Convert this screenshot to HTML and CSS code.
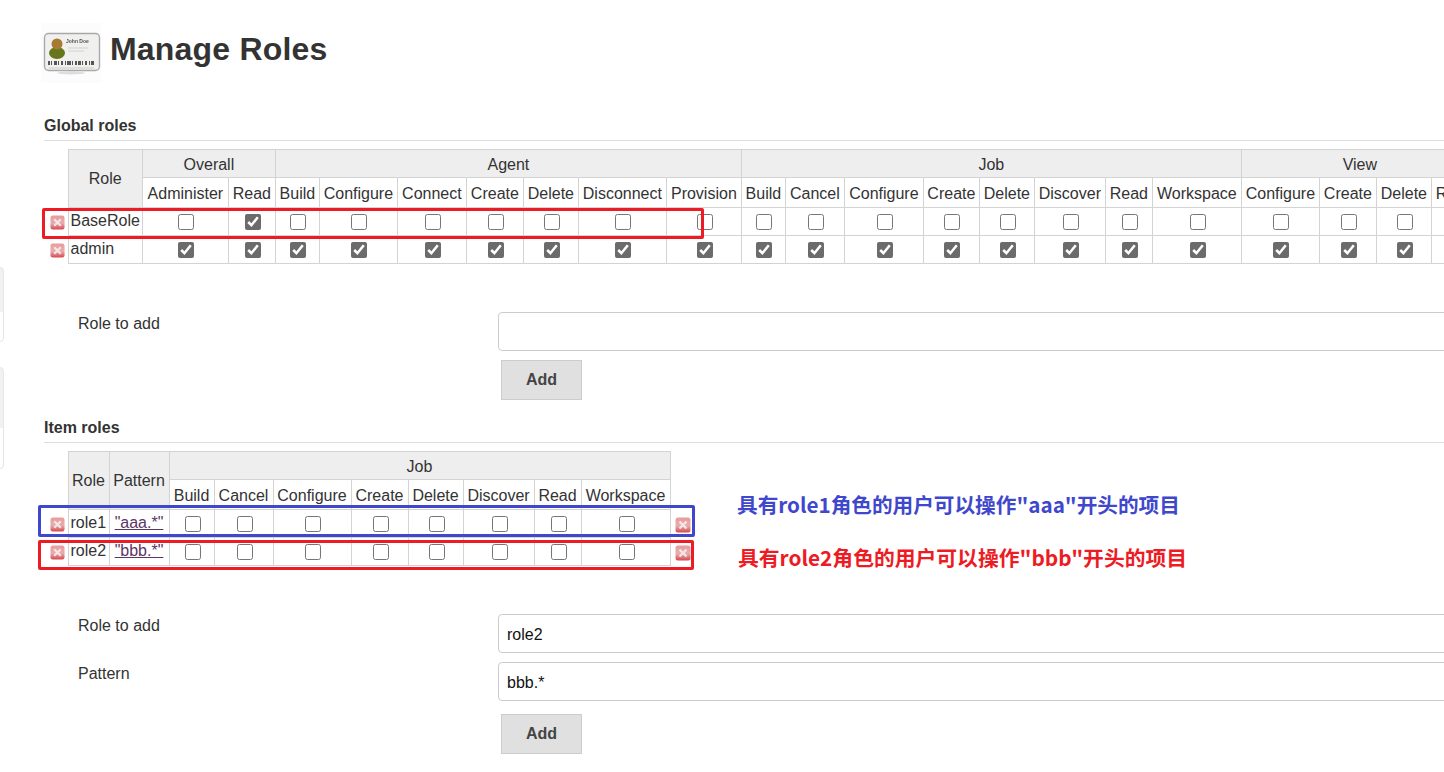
FILE: index.html
```html
<!DOCTYPE html>
<html lang="en">

<head>
    <meta charset="UTF-8">
    <title>Manage Roles</title>
    <link rel="stylesheet" href="styles.css">
</head>

<body>
    <svg class="defs" width="0" height="0">
        <defs>
            <linearGradient id="delFill" x1="0" y1="0" x2="0" y2="1">
                <stop offset="0" stop-color="#eb9a9a" />
                <stop offset="0.55" stop-color="#e6aeae" />
                <stop offset="1" stop-color="#d9474e" />
            </linearGradient>
            <filter id="soft" x="-10%" y="-10%" width="120%" height="120%">
                <feGaussianBlur stdDeviation="0.35" />
            </filter>
            <filter id="softer" x="-10%" y="-10%" width="120%" height="120%">
                <feGaussianBlur stdDeviation="0.5" />
            </filter>
            <symbol id="del" viewBox="0 0 16 16">
                <g filter="url(#soft)">
                    <rect x="0.5" y="0.5" width="15" height="15" rx="2.5" fill="url(#delFill)" />
                    <path d="M4.5 4.5l7 7M11.5 4.5l-7 7" stroke="#f3e6e6" stroke-width="2.4" />
                </g>
            </symbol>
        </defs>
    </svg>

    <!-- edges of the side panels that stick out on the left -->
    <div class="side-edge side-edge--one"></div>
    <div class="side-edge side-edge--two"></div>

    <div class="page">
        <div class="page__header">
            <svg class="page__icon" width="60" height="60" viewBox="0 0 60 60">
                <rect width="60" height="60" fill="#fcfcfc" />
                <ellipse cx="30" cy="50" rx="14" ry="1.5" fill="#ddd" />
                <g filter="url(#softer)">
                    <rect x="3.5" y="10.5" width="55" height="37" rx="4" fill="#f0f0ee" stroke="#a9a9a9" stroke-width="1.4" />
                    <ellipse cx="16" cy="30" rx="8" ry="6" fill="#66761f" />
                    <circle cx="16" cy="21" r="5.5" fill="#a77a32" />
                    <text class="page__icon-name" x="25" y="20">John Doe</text>
                    <path d="M27 25h20M27 28h16" stroke="#d2d2d2" stroke-width="1" />
                    <path d="M7 40h2M10 40h1M13 40h3M17 40h1M20 40h2M24 40h1M26 40h4M31 40h1M34 40h2M37 40h3M41 40h1M44 40h2M48 40h1M50 40h3" stroke="#555" stroke-width="4" />
                    <path d="M8 45h45" stroke="#ccc" stroke-width="1" />
                </g>
            </svg>
            <h1>Manage Roles</h1>
        </div>

        <h2 class="section__title section__title--first">Global roles</h2>
        <table class="roles roles--global">
            <colgroup>
                <col class="w24"><col class="w74"><col class="w86"><col class="w47"><col class="w44"><col class="w78"><col class="w69"><col class="w57"><col class="w55"><col class="w88"><col class="w75"><col class="w44"><col class="w59"><col class="w79"><col class="w56"><col class="w55"><col class="w71"><col class="w47"><col class="w89"><col class="w78"><col class="w57"><col class="w55"><col class="w47">
            </colgroup>
            <thead>
                <tr>
                    <th class="blank" rowspan="2"></th>
                    <th class="group group--tall" rowspan="2">Role</th>
                    <th class="group" colspan="2">Overall</th>
                    <th class="group" colspan="7">Agent</th>
                    <th class="group" colspan="8">Job</th>
                    <th class="group" colspan="4">View</th>
                </tr>
                <tr>
                    <th>Administer</th><th>Read</th>
                    <th>Build</th><th>Configure</th><th>Connect</th><th>Create</th><th>Delete</th><th>Disconnect</th><th>Provision</th>
                    <th>Build</th><th>Cancel</th><th>Configure</th><th>Create</th><th>Delete</th><th>Discover</th><th>Read</th><th>Workspace</th>
                    <th>Configure</th><th>Create</th><th>Delete</th><th>Read</th>
                </tr>
            </thead>
            <tbody>
                <tr>
                    <td class="blank"><svg class="del" width="15" height="15"><use href="#del" /></svg></td>
                    <td class="name">BaseRole</td>
                    <td><input type="checkbox"></td><td><input type="checkbox" checked></td>
                    <td><input type="checkbox"></td><td><input type="checkbox"></td><td><input type="checkbox"></td><td><input type="checkbox"></td><td><input type="checkbox"></td><td><input type="checkbox"></td><td><input type="checkbox"></td>
                    <td><input type="checkbox"></td><td><input type="checkbox"></td><td><input type="checkbox"></td><td><input type="checkbox"></td><td><input type="checkbox"></td><td><input type="checkbox"></td><td><input type="checkbox"></td><td><input type="checkbox"></td>
                    <td><input type="checkbox"></td><td><input type="checkbox"></td><td><input type="checkbox"></td><td><input type="checkbox"></td>
                </tr>
                <tr>
                    <td class="blank"><svg class="del" width="15" height="15"><use href="#del" /></svg></td>
                    <td class="name">admin</td>
                    <td><input type="checkbox" checked></td><td><input type="checkbox" checked></td>
                    <td><input type="checkbox" checked></td><td><input type="checkbox" checked></td><td><input type="checkbox" checked></td><td><input type="checkbox" checked></td><td><input type="checkbox" checked></td><td><input type="checkbox" checked></td><td><input type="checkbox" checked></td>
                    <td><input type="checkbox" checked></td><td><input type="checkbox" checked></td><td><input type="checkbox" checked></td><td><input type="checkbox" checked></td><td><input type="checkbox" checked></td><td><input type="checkbox" checked></td><td><input type="checkbox" checked></td><td><input type="checkbox" checked></td>
                    <td><input type="checkbox" checked></td><td><input type="checkbox" checked></td><td><input type="checkbox" checked></td><td><input type="checkbox" checked></td>
                </tr>
            </tbody>
        </table>

        <form class="add-form">
            <label for="globalRole">Role to add</label>
            <input class="text-input" type="text" id="globalRole">
            <button class="add-btn" type="button">Add</button>
        </form>

        <h2 class="section__title">Item roles</h2>
        <table class="roles roles--item">
            <colgroup>
                <col class="w24"><col class="w41"><col class="w60"><col class="w45"><col class="w59"><col class="w78"><col class="w57"><col class="w55"><col class="w71"><col class="w47"><col class="w89"><col class="w24">
            </colgroup>
            <thead>
                <tr>
                    <th class="blank" rowspan="2"></th>
                    <th class="group group--tall" rowspan="2">Role</th>
                    <th class="group group--tall" rowspan="2">Pattern</th>
                    <th class="group" colspan="8">Job</th>
                    <th class="blank blank--head" rowspan="2"></th>
                </tr>
                <tr>
                    <th>Build</th><th>Cancel</th><th>Configure</th><th>Create</th><th>Delete</th><th>Discover</th><th>Read</th><th>Workspace</th>
                </tr>
            </thead>
            <tbody>
                <tr>
                    <td class="blank"><svg class="del" width="15" height="15"><use href="#del" /></svg></td>
                    <td class="name">role1</td>
                    <td class="name"><a class="pattern" href="#">"aaa.*"</a></td>
                    <td><input type="checkbox"></td><td><input type="checkbox"></td><td><input type="checkbox"></td><td><input type="checkbox"></td><td><input type="checkbox"></td><td><input type="checkbox"></td><td><input type="checkbox"></td><td><input type="checkbox"></td>
                    <td class="blank blank--right"><svg class="del" width="16" height="16"><use href="#del" /></svg></td>
                </tr>
                <tr>
                    <td class="blank"><svg class="del" width="15" height="15"><use href="#del" /></svg></td>
                    <td class="name">role2</td>
                    <td class="name"><a class="pattern" href="#">"bbb.*"</a></td>
                    <td><input type="checkbox"></td><td><input type="checkbox"></td><td><input type="checkbox"></td><td><input type="checkbox"></td><td><input type="checkbox"></td><td><input type="checkbox"></td><td><input type="checkbox"></td><td><input type="checkbox"></td>
                    <td class="blank blank--right"><svg class="del" width="16" height="16"><use href="#del" /></svg></td>
                </tr>
            </tbody>
        </table>

        <form class="add-form">
            <label for="itemRole">Role to add</label>
            <input class="text-input" type="text" id="itemRole" value="role2">
            <label for="itemPattern">Pattern</label>
            <input class="text-input" type="text" id="itemPattern" value="bbb.*">
            <button class="add-btn add-btn--low" type="button">Add</button>
        </form>
    </div>

    <!-- marks drawn on top of the screenshot -->
    <div class="mark mark--base"></div>
    <div class="mark mark--role1"></div>
    <div class="mark mark--role2"></div>
    <div class="note note--blue">具有role1角色的用户可以操作"aaa"开头的项目</div>
    <div class="note note--red">具有role2角色的用户可以操作"bbb"开头的项目</div>
</body>

</html>
```

FILE: styles.css
```css
html,
body {
    margin: 0;
    height: 772px;
    overflow: hidden;
    background: #fff;
}

body {
    position: relative;
    font-family: "Liberation Sans", Arial, sans-serif;
    font-size: 16px;
    color: #333;
}

.defs {
    position: absolute;
}

.page {
    width: 1500px;
    padding: 23px 0 0 44px;
}

.page__header {
    display: flex;
    height: 60px;
    margin-left: -3px;
    gap: 9px;
}

.page__icon-name {
    font-size: 5px;
    font-weight: bold;
    fill: #555;
}

h1 {
    margin: 0;
    font-size: 32px;
    letter-spacing: 0.2px;
    line-height: 53px;
    font-weight: bold;
}

.section__title {
    margin: 17px 0 0;
    padding-bottom: 3px;
    border-bottom: 1px solid #ddd;
    font-size: 16px;
    line-height: 22px;
    font-weight: bold;
}

.section__title--first {
    margin-top: 32px;
}

.roles {
    table-layout: fixed;
    border-collapse: collapse;
    margin-top: 8px;
    width: max-content;
}

.roles th,
.roles td {
    height: 28px;
    padding: 0;
    border: 1px solid #d3d3d3;
    text-align: center;
    font-weight: normal;
    box-sizing: border-box;
}

.roles td {
    padding-left: 2px;
}

.roles th {
    height: 30px;
    padding-top: 2px;
    white-space: nowrap;
    overflow: hidden;
}

.roles thead tr:first-child th {
    height: 28px;
}

.roles .group {
    background: #eee;
}

.roles .group--tall {
    padding-top: 0;
}

.roles .blank {
    padding: 0;
    border: none;
    border-right: 1px solid #d3d3d3;
    text-align: left;
    vertical-align: middle;
}

.roles .blank--head {
    border-right: none;
}

.roles .blank--right {
    border-right: none;
    border-left: 1px solid #d3d3d3;
    padding-left: 4px;
}

.roles .name {
    padding: 0 2px 2px;
    text-align: left;
    white-space: nowrap;
}

.del {
    display: block;
    margin: 2px 0 0 6px;
}

.blank--right .del {
    margin-left: 0;
}

.roles input[type="checkbox"] {
    display: block;
    width: 16px;
    height: 16px;
    margin: 0 auto;
    accent-color: #6b6b6b;
}

.pattern {
    display: block;
    text-align: center;
    color: #5c3566;
}

.add-form {
    display: grid;
    grid-template-columns: 420px 1fr;
    row-gap: 9px;
    margin: 48px 0 0 34px;
}

.add-form label {
    line-height: 24px;
}

.text-input {
    height: 39px;
    box-sizing: border-box;
    width: 1000px;
    padding: 2px 8px 0;
    border: 1px solid #ccc;
    border-radius: 4px;
    font-family: "Liberation Sans", Arial, sans-serif;
    font-size: 16px;
    color: #111;
}

.add-btn {
    grid-column: 2;
    width: 81px;
    height: 40px;
    margin-left: 3px;
    border: 1px solid #ccc;
    background: #e0e0e0;
    color: #444;
    font-family: "Liberation Sans", Arial, sans-serif;
    font-size: 16px;
    font-weight: bold;
}

.add-btn--low {
    margin-top: 4px;
}

.w24 { width: 24px; }
.w41 { width: 41px; }
.w44 { width: 44px; }
.w45 { width: 45px; }
.w47 { width: 47px; }
.w55 { width: 55px; }
.w56 { width: 56px; }
.w57 { width: 57px; }
.w59 { width: 59px; }
.w60 { width: 60px; }
.w69 { width: 69px; }
.w71 { width: 71px; }
.w74 { width: 74px; }
.w75 { width: 75px; }
.w78 { width: 78px; }
.w79 { width: 79px; }
.w86 { width: 86px; }
.w88 { width: 88px; }
.w89 { width: 89px; }

.side-edge {
    position: absolute;
    left: -6px;
    width: 8px;
    border: 1px solid #e6e6e6;
    border-radius: 4px;
    background: linear-gradient(#f1f1f1 60%, #fff 60%);
}

.side-edge--one {
    top: 267px;
    height: 73px;
}

.side-edge--two {
    top: 367px;
    height: 100px;
}

.mark {
    position: absolute;
    box-sizing: border-box;
    border: 3px solid #ed1c24;
    border-radius: 2px;
}

.mark--base {
    left: 42px;
    top: 208px;
    width: 662px;
    height: 31px;
}

.mark--role1 {
    left: 38px;
    top: 505px;
    width: 657px;
    height: 32px;
    border-color: #3f48cc;
}

.mark--role2 {
    left: 38px;
    top: 540px;
    width: 656px;
    height: 30px;
}

.note {
    position: absolute;
    left: 737px;
    font-family: "Noto Sans CJK SC", "Liberation Sans", sans-serif;
    font-size: 20.8px;
    line-height: 28px;
    font-weight: bold;
    white-space: nowrap;
    color: #ed1c24;
}

.note--blue {
    top: 490px;
    font-size: 20.65px;
    color: #3f48cc;
}

.note--red {
    top: 543px;
    margin-left: 1px;
}
```
